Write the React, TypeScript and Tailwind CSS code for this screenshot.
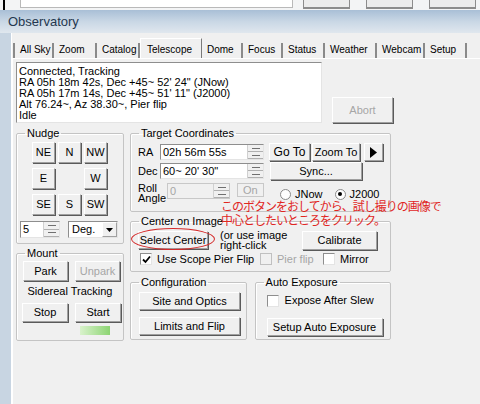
import React from "react";

const raised =
  "flex items-center justify-center bg-[#f0f0f0] border border-t-white border-l-white border-r-[#a0a0a0] border-b-[#a0a0a0] shadow-[1px_1px_0_#5a5a5a]";
const sunken =
  "bg-white border border-t-[#8e8e8e] border-l-[#8e8e8e] border-r-[#e4e4e4] border-b-[#e4e4e4]";

function Btn({ children, className = "", disabled = false }: { children?: React.ReactNode; className?: string; disabled?: boolean }) {
  return <div className={`${raised} ${disabled ? "text-[#a6a6a6]" : "text-black"} ${className}`}>{children}</div>;
}

// fieldset keeps no padding so the legend stays put; content gets its own box
function Group({ title, className = "", inner = "", children }: { title: string; className?: string; inner?: string; children?: React.ReactNode }) {
  return (
    <fieldset className={`border border-[#c4c4c4] rounded-[2px] shadow-[inset_1px_1px_0_#ffffff] ${className}`}>
      <legend className="ml-[8px] px-[2px] leading-[12px]">{title}</legend>
      <div className={inner}>{children}</div>
    </fieldset>
  );
}

function Spin({ value, className = "", disabled = false }: { value: string; className?: string; disabled?: boolean }) {
  return (
    <div className={`flex h-[16px] ${disabled ? "bg-[#f0f0f0] border border-[#c8c8c8]" : sunken} ${className}`}>
      <div className={`flex-1 pl-[2px] leading-[14px] ${disabled ? "text-[#a6a6a6]" : ""}`}>{value}</div>
      <div className="flex flex-col w-[16px] border-l border-[#d0d0d0]">
        {[0, 1].map((i) => (
          <div key={i} className="flex-1 flex items-center justify-center bg-[#f0f0f0] border-b border-[#b0b0b0]">
            <div className="w-[8px] h-[1px] bg-[#707070]" />
          </div>
        ))}
      </div>
    </div>
  );
}

function Check({ checked = false, disabled = false }: { checked?: boolean; disabled?: boolean }) {
  return (
    <div className={`w-[12px] h-[12px] flex items-center justify-center ${disabled ? "bg-[#f0f0f0] border border-[#c0c0c0]" : sunken}`}>
      {checked && (
        <svg width="9" height="9" viewBox="0 0 9 9">
          <path d="M1 4.5 L3.5 7 L8 1.5" fill="none" stroke="#000" strokeWidth="1.8" />
        </svg>
      )}
    </div>
  );
}

function Radio({ checked = false, label }: { checked?: boolean; label: string }) {
  return (
    <div className="flex items-center gap-[4px]">
      <div className="w-[11px] h-[11px] rounded-full bg-white border border-[#8a8a8a] flex items-center justify-center">
        {checked && <div className="w-[4px] h-[4px] rounded-full bg-black" />}
      </div>
      <span>{label}</span>
    </div>
  );
}

const tabs = [
  { label: "All Sky", w: "w-[41px] border-l-2" },
  { label: "Zoom", w: "w-[43px]" },
  { label: "Catalog", w: "w-[43px]" },
  { label: "Telescope", w: "w-[62px]", active: true },
  { label: "Dome", w: "w-[41px]" },
  { label: "Focus", w: "w-[40px]" },
  { label: "Status", w: "w-[42px]" },
  { label: "Weather", w: "w-[52px]" },
  { label: "Webcam", w: "w-[48px]" },
  { label: "Setup", w: "w-[42px]" },
];

export default function App() {
  return (
    <div className="relative w-[480px] h-[404px] overflow-hidden whitespace-nowrap bg-[#f0f0f0] text-[11px] text-black font-['Liberation_Sans',Arial,sans-serif]">
      {/* top strip of the parent window */}
      <div className="h-[10px] flex bg-[#f3f4f5]">
        <div className="w-[2px] ml-[3px] bg-black" />
        <div className="w-[273px] ml-[15px] h-[8px] bg-white border-b border-x border-[#b9b9b9]" />
        <div className="w-[47px] ml-[10px] h-[9px] bg-[#ececec] border-b-2 border-x border-[#8c8c8c]" />
        <div className="w-[47px] ml-[16px] h-[9px] bg-[#ececec] border-b-2 border-x border-[#8c8c8c]" />
        <div className="w-[47px] ml-[16px] h-[9px] bg-[#ececec] border-b-2 border-x border-[#8c8c8c]" />
      </div>

      {/* title bar */}
      <div className="h-[23px] flex items-center pl-[8px] bg-gradient-to-b from-[#a9bfd6] via-[#c9d7e5] to-[#e0e7ee] text-[13px] text-[#24374f]">
        Observatory
      </div>

      <div className="flex h-[371px]">
        <div className="w-[12px] bg-[#c8d5e2] border-r border-white" />
        <div className="flex-1 pt-[5px]">
          {/* tabs */}
          <div className="flex items-end h-[20px] ml-[1px] text-[10px]">
            {tabs.map((t) =>
              t.active ? (
                <div
                  key={t.label}
                  className={`${t.w} h-[20px] pl-[6px] pt-[3px] border-t border-l border-white border-r border-r-[#7a7a7a] bg-[#f0f0f0]`}
                >
                  {t.label}
                </div>
              ) : (
                <div key={t.label} className={`${t.w} h-[15px] pl-[5px] leading-[14px] border-r-2 border-[#8a8a8a] border-l-[#8a8a8a]`}>
                  {t.label}
                </div>
              )
            )}
          </div>

          {/* tab page */}
          <div className="border-t border-l border-white pl-[3px] pt-[3px] h-[346px]">
            <div className="flex">
              <div className={`w-[306px] h-[61px] pl-[2px] pt-[3px] leading-[11px] ${sunken}`}>
                <div>Connected, Tracking</div>
                <div>RA 05h 18m 42s, Dec +45~ 52' 24" (JNow)</div>
                <div>RA 05h 17m 14s, Dec +45~ 51' 11" (J2000)</div>
                <div>Alt 76.24~, Az 38.30~, Pier flip</div>
                <div>Idle</div>
              </div>
              <Btn disabled className="self-end ml-[10px] w-[61px] h-[26px]">
                Abort
              </Btn>
            </div>

            <div className="flex mt-[4px] gap-[6px]">
              {/* left column */}
              <div className="w-[108px] flex flex-col">
                <Group title="Nudge" inner="pb-[5px]">
                  <div className="grid grid-cols-[23px_23px_23px] gap-x-[3px] gap-y-[5px] pl-[15px] mt-[3px]">
                    <Btn className="h-[21px]">NE</Btn>
                    <Btn className="h-[21px]">N</Btn>
                    <Btn className="h-[21px]">NW</Btn>
                    <Btn className="h-[21px]">E</Btn>
                    <div />
                    <Btn className="h-[21px]">W</Btn>
                    <Btn className="h-[21px]">SE</Btn>
                    <Btn className="h-[21px]">S</Btn>
                    <Btn className="h-[21px]">SW</Btn>
                  </div>
                  <div className="flex mt-[6px] pl-[3px]">
                    <Spin value="5" className="w-[40px] h-[17px]" />
                    <div className={`flex ml-[8px] w-[50px] h-[17px] ${sunken}`}>
                      <div className="flex-1 pl-[3px] leading-[15px]">Deg.</div>
                      <div className={`${raised} w-[15px] shadow-none`}>
                        <svg width="7" height="4" viewBox="0 0 7 4">
                          <path d="M0 0 H7 L3.5 4 Z" fill="#000" />
                        </svg>
                      </div>
                    </div>
                  </div>
                </Group>

                <Group title="Mount" className="mt-[3px]" inner="pb-[5px]">
                  <div className="flex pl-[6px] gap-[7px] mt-[2px]">
                    <Btn className="w-[45px] h-[20px]">Park</Btn>
                    <Btn disabled className="w-[45px] h-[20px]">
                      Unpark
                    </Btn>
                  </div>
                  <div className="text-center leading-[12px] mt-[4px]">Sidereal Tracking</div>
                  <div className="flex pl-[5px] gap-[7px] mt-[6px]">
                    <Btn className="w-[46px] h-[19px]">Stop</Btn>
                    <Btn className="w-[46px] h-[19px]">Start</Btn>
                  </div>
                  <div className="ml-[63px] mt-[4px] w-[30px] h-[9px] bg-gradient-to-r from-[#d9f2cc] to-[#8cd472]" />
                </Group>
              </div>

              {/* right column */}
              <div className="w-[261px] flex flex-col">
                <Group title="Target Coordinates" inner="pl-[7px] pb-[8px]">
                  <div className="flex items-center h-[18px] mt-[4px]">
                    <span className="w-[22px]">RA</span>
                    <Spin value="02h 56m 55s" className="w-[104px]" />
                    <Btn className="ml-[5px] w-[41px] h-[18px] text-[12px]">Go To</Btn>
                    <Btn className="ml-[2px] w-[48px] h-[18px]">Zoom To</Btn>
                    <Btn className="ml-[4px] w-[19px] h-[18px]">
                      <svg width="7" height="11" viewBox="0 0 7 11">
                        <path d="M0 0 L7 5.5 L0 11 Z" fill="#000" />
                      </svg>
                    </Btn>
                  </div>
                  <div className="flex items-center h-[18px] mt-[1px]">
                    <span className="w-[22px]">Dec</span>
                    <Spin value={'60~ 20\' 30"'} className="w-[104px]" />
                    <Btn className="ml-[6px] w-[92px] h-[18px]">Sync...</Btn>
                  </div>
                  <div className="flex items-start h-[20px] mt-[3px]">
                    <span className="w-[29px] leading-[10px]">
                      Roll
                      <br />
                      Angle
                    </span>
                    <Spin value="0" disabled className="w-[63px]" />
                    <div className="ml-[7px] w-[27px] h-[14px] border border-[#c8c8c8] pl-[5px] leading-[12px] text-[#a6a6a6]">On</div>
                    <div className="ml-[16px] mt-[3px] flex">
                      <Radio label="JNow" />
                      <div className="ml-[12px]">
                        <Radio checked label="J2000" />
                      </div>
                    </div>
                  </div>
                </Group>

                <Group title="Center on Image" className="mt-[3px]" inner="pl-[7px] pb-[6px]">
                  <div className="flex items-center h-[20px] mt-[3px] pr-[13px]">
                    <Btn className="w-[70px] h-[18px]">Select Center</Btn>
                    <div className="ml-[12px] leading-[10px]">
                      (or use image
                      <br />
                      right-click
                    </div>
                    <Btn className="ml-auto w-[75px] h-[19px]">Calibrate</Btn>
                  </div>
                  <div className="flex items-center mt-[3px] h-[12px]">
                    <div className="flex items-center gap-[5px] ml-[2px] w-[120px]">
                      <Check checked />
                      <span>Use Scope Pier Flip</span>
                    </div>
                    <div className="flex items-center gap-[5px] w-[63px] text-[#a6a6a6]">
                      <Check disabled />
                      <span>Pier flip</span>
                    </div>
                    <div className="flex items-center gap-[5px]">
                      <Check />
                      <span>Mirror</span>
                    </div>
                  </div>
                </Group>

                <div className="flex mt-[4px] gap-[8px]">
                  <Group title="Configuration" className="w-[117px]" inner="pl-[8px] pb-[4px]">
                    <Btn className="mt-[4px] w-[101px] h-[18px]">Site and Optics</Btn>
                    <Btn className="mt-[7px] w-[101px] h-[18px]">Limits and Flip</Btn>
                  </Group>
                  <Group title="Auto Exposure" className="w-[137px]" inner="pl-[11px] pb-[3px]">
                    <div className="flex items-center gap-[6px] mt-[7px] h-[11px]">
                      <Check />
                      <span>Expose After Slew</span>
                    </div>
                    <Btn className="mt-[12px] w-[116px] h-[18px]">Setup Auto Exposure</Btn>
                  </Group>
                </div>
              </div>
            </div>
          </div>
        </div>
      </div>

      {/* annotation overlay */}
      <div className="absolute left-[131px] top-[228px] w-[84px] h-[22px] rounded-[50%] border-[1.5px] border-[#d42a2a]" />
      <div className="absolute left-[221px] top-[199px] text-[12px] leading-[14px] tracking-[-1px] text-[#e0261f] font-['Noto_Sans_CJK_JP',sans-serif]">
        このボタンをおしてから、試し撮りの画像で
        <br />
        中心としたいところをクリック。
      </div>
    </div>
  );
}
